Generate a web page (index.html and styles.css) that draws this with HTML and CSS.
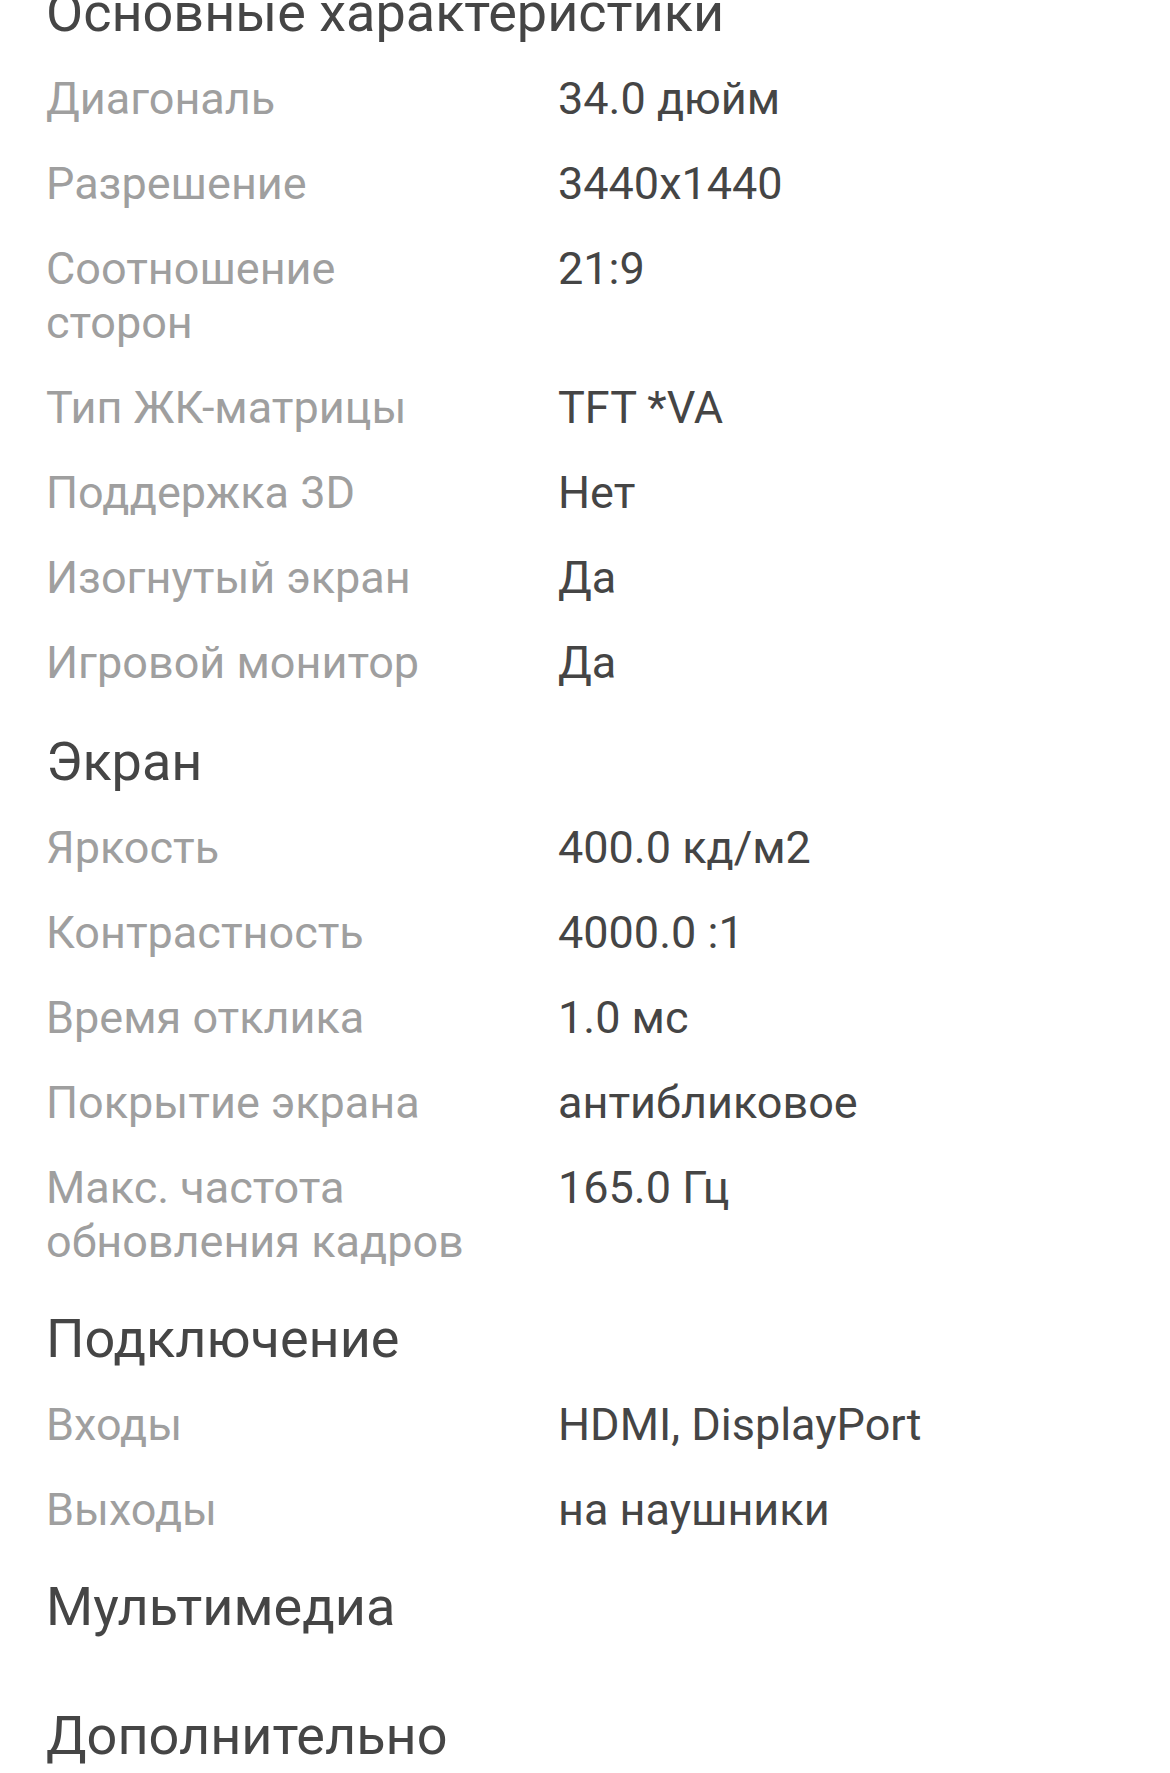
FILE: index.html
```html
<!DOCTYPE html>
<html lang="ru">
<head>
<meta charset="utf-8">
<title>Характеристики</title>
<link rel="stylesheet" href="styles.css">
</head>
<body>
<main class="page">
  <section class="spec-section">
    <h2 class="spec-title">Основные характеристики</h2>
    <dl class="spec-list">
      <div class="spec-row"><dt>Диагональ</dt><dd>34.0 дюйм</dd></div>
      <div class="spec-row"><dt>Разрешение</dt><dd>3440x1440</dd></div>
      <div class="spec-row"><dt>Соотношение сторон</dt><dd>21:9</dd></div>
      <div class="spec-row"><dt>Тип ЖК-матрицы</dt><dd>TFT *VA</dd></div>
      <div class="spec-row"><dt>Поддержка 3D</dt><dd>Нет</dd></div>
      <div class="spec-row"><dt>Изогнутый экран</dt><dd>Да</dd></div>
      <div class="spec-row"><dt>Игровой монитор</dt><dd>Да</dd></div>
    </dl>
  </section>
  <section class="spec-section">
    <h2 class="spec-title">Экран</h2>
    <dl class="spec-list">
      <div class="spec-row"><dt>Яркость</dt><dd>400.0 кд/м2</dd></div>
      <div class="spec-row"><dt>Контрастность</dt><dd>4000.0 :1</dd></div>
      <div class="spec-row"><dt>Время отклика</dt><dd>1.0 мс</dd></div>
      <div class="spec-row"><dt>Покрытие экрана</dt><dd>антибликовое</dd></div>
      <div class="spec-row"><dt>Макс. частота обновления кадров</dt><dd>165.0 Гц</dd></div>
    </dl>
  </section>
  <section class="spec-section">
    <h2 class="spec-title">Подключение</h2>
    <dl class="spec-list">
      <div class="spec-row"><dt>Входы</dt><dd>HDMI, DisplayPort</dd></div>
      <div class="spec-row"><dt>Выходы</dt><dd>на наушники</dd></div>
    </dl>
  </section>
  <section class="spec-section">
    <h2 class="spec-title">Мультимедиа</h2>
    <dl class="spec-list"></dl>
  </section>
  <section class="spec-section">
    <h2 class="spec-title">Дополнительно</h2>
    <dl class="spec-list"></dl>
  </section>
</main>
</body>
</html>
```

FILE: styles.css
```css
html, body {
  margin: 0;
  padding: 0;
  background: #ffffff;
}

body {
  font-family: Roboto, "Noto Sans", "Liberation Sans", sans-serif;
  color: #454545;
  overflow: hidden;
}

.page {
  margin-top: -20px;
  padding: 0 40px 0 46px;
}

.spec-section {
  padding-bottom: 22px;
}

.spec-section:first-child {
  padding-bottom: 24px;
}

.spec-title {
  margin: 0 0 10px 0;
  font-size: 54px;
  line-height: 66px;
  font-weight: 400;
  color: #454545;
}

.spec-list {
  margin: 0;
}

.spec-list:empty {
  height: 31px;
}

.spec-row {
  display: grid;
  grid-template-columns: 432px 1fr;
  column-gap: 80px;
  padding: 15.5px 0;
  font-size: 45px;
  line-height: 54px;
}

.spec-row dt {
  color: #9f9f9f;
}

.spec-row dd {
  margin: 0;
  color: #454545;
}
```
